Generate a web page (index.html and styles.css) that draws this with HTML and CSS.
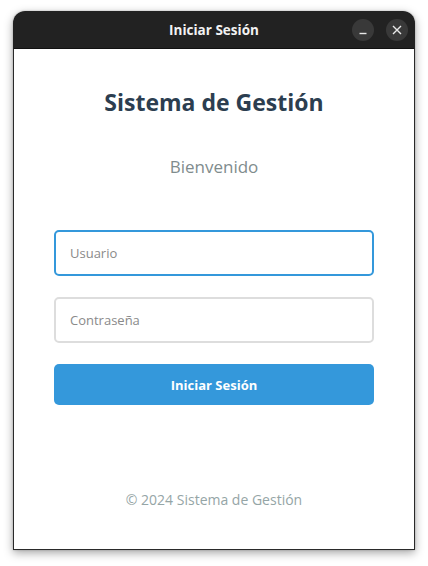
FILE: index.html
```html
<!DOCTYPE html>
<html lang="es">
<head>
<meta charset="utf-8">
<title>Iniciar Sesión</title>
<link rel="stylesheet" href="styles.css">
</head>
<body>
<div class="window">
  <header class="titlebar">
    <span class="title">Iniciar Sesión</span>
    <div class="controls">
      <button class="ctl" aria-label="Minimizar">
        <svg width="10" height="10" viewBox="0 0 10 10"><path d="M1.5 8.5H8.5" stroke="#e8e8e8" stroke-width="1.4"/></svg>
      </button>
      <button class="ctl" aria-label="Cerrar">
        <svg width="10" height="10" viewBox="0 0 10 10"><path d="M1 1L9 9M9 1L1 9" stroke="#e8e8e8" stroke-width="1.4"/></svg>
      </button>
    </div>
  </header>
  <main class="content">
    <h1 class="heading">Sistema de Gestión</h1>
    <p class="welcome">Bienvenido</p>
    <form class="form">
      <input class="field field-focus" type="text" placeholder="Usuario">
      <input class="field" type="password" placeholder="Contraseña">
      <button class="submit" type="button">Iniciar Sesión</button>
    </form>
    <footer class="footer">© 2024 Sistema de Gestión</footer>
  </main>
</div>
</body>
</html>
```
FILE: styles.css
```css
* { box-sizing: border-box; }
html, body { margin: 0; padding: 0; background: #ffffff; }
body {
  font-family: "Open Sans", "Noto Sans", sans-serif;
  width: 428px;
  height: 566px;
  overflow: hidden;
}
.window {
  margin: 11px 0 0 13px;
  width: 402px;
  height: 539px;
  display: flex;
  flex-direction: column;
  border-radius: 12px 12px 0 0;
  box-shadow: 0 3px 10px rgba(0,0,0,0.35), 0 0 2px rgba(0,0,0,0.25);
}
.titlebar {
  position: relative;
  height: 37px;
  flex: none;
  background: #222222;
  border-radius: 12px 12px 0 0;
  display: flex;
  align-items: center;
  justify-content: center;
}
.title {
  color: #f2f2f2;
  font-weight: 700;
  font-size: 13.5px;
}
.controls {
  position: absolute;
  right: 7px;
  top: 8px;
  display: flex;
  gap: 12px;
}
.ctl {
  width: 22px;
  height: 22px;
  border-radius: 50%;
  border: none;
  padding: 0;
  background: #393939;
  display: flex;
  align-items: center;
  justify-content: center;
}
.content {
  flex: 1;
  background: #ffffff;
  border: 1px solid #2a2a2a;
  border-top: 1px solid #111;
  display: flex;
  flex-direction: column;
  align-items: center;
  padding: 0 39px 40px;
}
.heading {
  margin: 38px 0 0;
  font-size: 23px;
  line-height: 30px;
  font-weight: 700;
  color: #2c3e50;
}
.welcome {
  margin: 39px 0 0;
  font-size: 17px;
  line-height: 22px;
  color: #7f8c8d;
}
.form {
  margin-top: 52px;
  width: 320px;
  display: flex;
  flex-direction: column;
  gap: 21px;
}
.field {
  height: 46px;
  border: 2px solid #dddddd;
  border-radius: 5px;
  padding: 0 14px;
  font-family: inherit;
  font-size: 13px;
  color: #333;
  outline: none;
}
.field::placeholder { color: #8a8a8a; }
.field-focus { border-color: #3498db; }
.submit {
  height: 41px;
  border: none;
  border-radius: 5px;
  background: #3498db;
  color: #ffffff;
  font-family: inherit;
  font-weight: 700;
  font-size: 13px;
}
.footer {
  margin-top: auto;
  font-size: 14px;
  line-height: 18px;
  color: #95a5a6;
}
```
